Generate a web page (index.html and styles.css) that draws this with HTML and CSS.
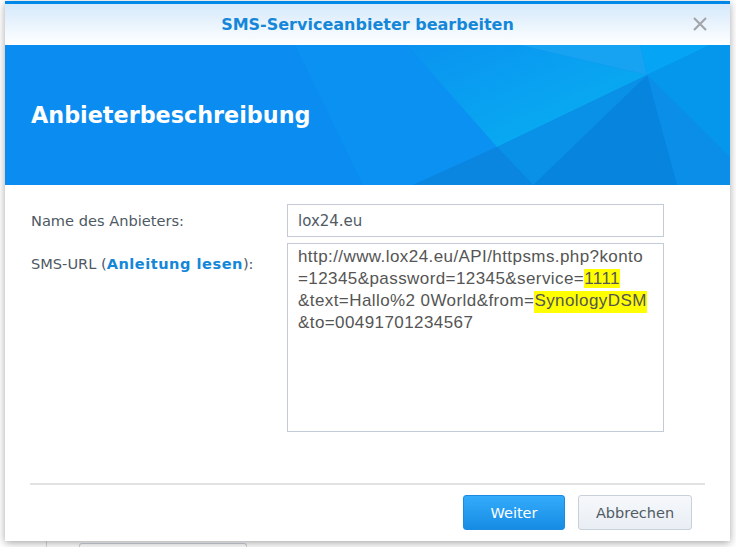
FILE: index.html
```html
<!DOCTYPE html>
<html lang="de">

<head>
    <meta charset="UTF-8">
    <meta name="viewport" content="width=device-width, initial-scale=1.0">
    <title>SMS-Serviceanbieter bearbeiten</title>
    <link rel="stylesheet" href="styles.css">
</head>

<body>

    <!-- Seite hinter dem Dialog -->
    <div class="backdrop">
        <div class="backdrop-row">
            <div class="backdrop-side"></div>
            <div class="backdrop-field"></div>
        </div>
    </div>

    <div class="dialog">
        <div class="dialog-title">
            <span>SMS-Serviceanbieter bearbeiten</span>
            <svg class="close-btn" width="16" height="16" viewBox="0 0 16 16">
                <path d="M2 2 L14 14 M14 2 L2 14" stroke="#a3a6a9" stroke-width="2.2" fill="none" />
            </svg>
        </div>

        <div class="banner">
            <svg class="banner-bg" viewBox="0 0 725 140" preserveAspectRatio="none">
                <defs>
                    <linearGradient id="wedge" x1="0" y1="0" x2="1" y2="1">
                        <stop offset="0" stop-color="#0a93f0" />
                        <stop offset="1" stop-color="#08b2f2" />
                    </linearGradient>
                </defs>
                <rect x="0" y="0" width="725" height="140" fill="#0a8cf0" />
                <polygon points="290,0 402,0 492,102 408,140 358,140" fill="#0a91f1" />
                <polygon points="402,0 515,0 642,30 492,102" fill="url(#wedge)" />
                <polygon points="515,0 635,0 642,30" fill="#17a3f1" />
                <polygon points="635,0 705,0 642,30" fill="#06a4f5" />
                <polygon points="705,0 725,0 725,112 642,30" fill="#0597ec" />
                <polygon points="642,30 725,112 725,140 672,140" fill="#0a8ee7" />
                <polygon points="642,30 672,140 528,140" fill="#0684de" />
                <polygon points="642,30 528,140 492,102" fill="#0991e7" />
                <polygon points="492,102 528,140 408,140" fill="#0a85e0" />
            </svg>
            <h1>Anbieterbeschreibung</h1>
        </div>

        <div class="form">
            <label class="form-label">Name des Anbieters:</label>
            <div class="input">lox24.eu</div>

            <label class="form-label label-top">SMS-URL (<a href="#">Anleitung lesen</a>):</label>
            <div class="textarea">
                http://www.lox24.eu/API/httpsms.php?konto<br>
                =12345&amp;password=12345&amp;service=<span class="mark">1111</span><br>
                &amp;text=Hallo%2 0World&amp;from=<span class="mark mark-wide">SynologyDSM</span><br>
                &amp;to=00491701234567
            </div>
        </div>

        <div class="dialog-footer">
            <button class="btn btn-primary">Weiter</button>
            <button class="btn">Abbrechen</button>
        </div>
    </div>

</body>

</html>
```

FILE: styles.css
```css
body {
    margin: 0;
    background-color: #ffffff;
    font-family: "DejaVu Sans", Verdana, sans-serif;
    overflow: hidden;
}

.backdrop {
    height: 547px;
    display: flex;
    flex-direction: column;
    justify-content: flex-end;
}

.backdrop-row {
    display: flex;
    height: 9px;
}

.backdrop-side {
    width: 46px;
    border-right: 1px solid #d4d8dd;
}

.backdrop-field {
    width: 166px;
    margin-left: 32px;
    margin-top: 5px;
    border: 1px solid #cdd5de;
    border-bottom: none;
    border-radius: 3px 3px 0 0;
}

/* Dialog liegt ueber der Seite */
.dialog {
    position: absolute;
    left: 5px;
    top: 1px;
    width: 725px;
    height: 537px;
    background-color: white;
    border-top: 3px solid #0088e8;
    box-shadow: 0 2px 8px rgba(0, 0, 0, 0.35);
    display: flex;
    flex-direction: column;
}

.dialog-title {
    height: 41px;
    display: flex;
    align-items: center;
    justify-content: center;
    position: relative;
    background: linear-gradient(#d5e9fb, #ffffff);
    color: #1587d9;
    font-size: 16px;
    font-weight: bold;
}

.close-btn {
    position: absolute;
    right: 22px;
    top: 12px;
}

.banner {
    height: 140px;
    position: relative;
    display: flex;
    align-items: center;
}

.banner-bg {
    position: absolute;
    left: 0;
    top: 0;
    width: 100%;
    height: 100%;
}

.banner h1 {
    position: relative;
    margin: 0 0 0 26px;
    color: white;
    font-size: 22.3px;
    font-weight: bold;
}

.form {
    display: grid;
    grid-template-columns: 256px 377px;
    row-gap: 6px;
    padding: 19px 0 51px 26px;
}

.form-label {
    color: #4e5863;
    font-size: 14.6px;
    align-self: center;
}

.form-label a {
    color: #1587d9;
    font-weight: bold;
    letter-spacing: 0.5px;
    text-decoration: none;
}

.label-top {
    align-self: start;
    padding-top: 12px;
}

.input {
    height: 31px;
    border: 1px solid #c3cbd6;
    padding: 0 10px;
    display: flex;
    align-items: center;
    color: #505a64;
    font-size: 15px;
}

.textarea {
    height: 185px;
    border: 1px solid #c3cbd6;
    padding: 2px 10px 0 10px;
    color: #555555;
    font-family: "Liberation Sans", Arial, sans-serif;
    font-size: 17px;
    letter-spacing: 0.42px;
    line-height: 22px;
    white-space: nowrap;
}

.mark {
    background-color: #ffff00;
}

.mark-wide {
    padding-bottom: 3px;
}

.dialog-footer {
    margin: 0 25px;
    border-top: 2px solid #e2e2e2;
    padding: 10px 13px 8px 0;
    display: flex;
    justify-content: flex-end;
    gap: 13px;
}

.btn {
    height: 35px;
    width: 114px;
    border: 1px solid #c8d0da;
    border-radius: 3px;
    background: linear-gradient(#f6f8fb, #e9eef4);
    color: #505a64;
    font-family: "DejaVu Sans", Verdana, sans-serif;
    font-size: 14.5px;
    cursor: pointer;
}

.btn-primary {
    width: 102px;
    border-color: #1a8be0;
    background: linear-gradient(#35abfb, #168ce4);
    color: white;
}
```
